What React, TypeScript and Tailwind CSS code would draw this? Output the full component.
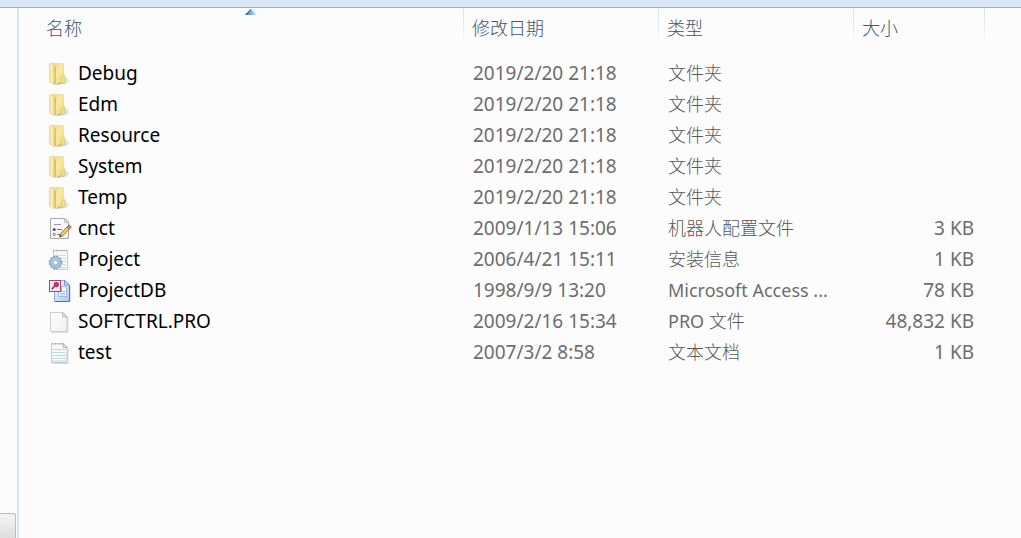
import { useState, type ReactNode } from "react";

type IconKind = "folder" | "config" | "setup" | "database" | "blank" | "text";

interface Entry {
  name: string;
  date: string;
  type: string;
  size: string;
  icon: IconKind;
}

const entries: Entry[] = [
  { name: "Debug", date: "2019/2/20 21:18", type: "文件夹", size: "", icon: "folder" },
  { name: "Edm", date: "2019/2/20 21:18", type: "文件夹", size: "", icon: "folder" },
  { name: "Resource", date: "2019/2/20 21:18", type: "文件夹", size: "", icon: "folder" },
  { name: "System", date: "2019/2/20 21:18", type: "文件夹", size: "", icon: "folder" },
  { name: "Temp", date: "2019/2/20 21:18", type: "文件夹", size: "", icon: "folder" },
  { name: "cnct", date: "2009/1/13 15:06", type: "机器人配置文件", size: "3 KB", icon: "config" },
  { name: "Project", date: "2006/4/21 15:11", type: "安装信息", size: "1 KB", icon: "setup" },
  { name: "ProjectDB", date: "1998/9/9 13:20", type: "Microsoft Access ...", size: "78 KB", icon: "database" },
  { name: "SOFTCTRL.PRO", date: "2009/2/16 15:34", type: "PRO 文件", size: "48,832 KB", icon: "blank" },
  { name: "test", date: "2007/3/2 8:58", type: "文本文档", size: "1 KB", icon: "text" },
];

function Gradients() {
  return (
    <svg className="absolute h-0 w-0" aria-hidden="true">
      <defs>
        <linearGradient id="folderBack" x1="0" x2="1" y1="0" y2="1">
          <stop offset="0" stopColor="#f0d57e" />
          <stop offset="0.5" stopColor="#fae9a4" />
          <stop offset="1" stopColor="#efd57c" />
        </linearGradient>
        <linearGradient id="folderSide" x1="0" x2="1" y1="0" y2="0">
          <stop offset="0" stopColor="#eedb9a" />
          <stop offset="0.5" stopColor="#fcf1bd" />
          <stop offset="1" stopColor="#e3c468" />
        </linearGradient>
        <linearGradient id="folderShade" x1="0" x2="1" y1="0" y2="0">
          <stop offset="0" stopColor="#7f8286" stopOpacity="0.8" />
          <stop offset="1" stopColor="#b9bbc0" stopOpacity="0.15" />
        </linearGradient>
        <linearGradient id="paper" x1="0" x2="1" y1="0" y2="1">
          <stop offset="0" stopColor="#ffffff" />
          <stop offset="1" stopColor="#f0f0ee" />
        </linearGradient>
        <linearGradient id="bluePaper" x1="0" x2="1" y1="0" y2="1">
          <stop offset="0" stopColor="#f4f8ff" />
          <stop offset="1" stopColor="#a9c6f3" />
        </linearGradient>
        <linearGradient id="sortArrow" x1="0" x2="1" y1="0" y2="0">
          <stop offset="0" stopColor="#2b5f83" />
          <stop offset="0.45" stopColor="#6fb6d6" />
          <stop offset="1" stopColor="#c8ecfb" />
        </linearGradient>
      </defs>
    </svg>
  );
}

function FileIcon({ kind }: { kind: IconKind }) {
  let body: ReactNode;
  if (kind === "folder") {
    body = (
      <>
        <path d="M8 22.8L17 22L22.5 19.2L20 17L16.5 15Z" fill="url(#folderShade)" />
        <path d="M3 1.2L15.6 1.8V19.5L8 21.5L3 19Z" fill="url(#folderBack)" stroke="#e3cb80" strokeWidth="0.5" />
        <path d="M14.6 14.4L16.8 13.6V20.4L14.8 21.6L13.4 21V15.4Z" fill="#f5dc85" stroke="#d8bc62" strokeWidth="0.5" />
        <path d="M1.4 2L3.8 1.4L6.8 4.2V23L1.4 20Z" fill="url(#folderSide)" stroke="#e0ca86" strokeWidth="0.5" />
        <path d="M6.8 4.4V22.8L8 22V5Z" fill="#cfa946" opacity="0.6" />
      </>
    );
  } else if (kind === "config") {
    body = (
      <>
        <path d="M2.5 1.5H17L20.5 5V21.5H2.5Z" fill="url(#paper)" stroke="#aaaaac" />
        <path d="M16.5 1.5V5.5H20.5Z" fill="#e0e0e0" stroke="#aaaaac" strokeWidth="0.7" />
        <path d="M6 7.5H13" stroke="#9b9bab" />
        <path d="M9 12.5H14M9 17.5H12" stroke="#77778e" />
        <circle cx="6.2" cy="12.4" r="1.5" fill="#4b4b86" />
        <circle cx="6.2" cy="17.4" r="1.2" fill="#ffffff" stroke="#5b5b96" strokeWidth="0.8" />
        <path d="M11.5 20L12.6 16.6L20 9L22.2 11.2L14.8 18.8Z" fill="#f0cd62" stroke="#81683a" strokeWidth="0.8" />
        <path d="M19 10L21.2 7.8L23.4 10L21.2 12.2Z" fill="#c4857a" stroke="#744742" strokeWidth="0.5" />
        <path d="M11.5 20L12.2 17.8L13.8 19.3Z" fill="#343434" />
      </>
    );
  } else if (kind === "setup") {
    body = (
      <>
        <path d="M5.5 2.5H19.5V21.5H5.5Z" fill="#f6f9fa" stroke="#c3ccd1" />
        <path d="M5.5 2.5H19.5" stroke="#98a4ab" strokeWidth="1.6" strokeDasharray="1 1.5" />
        <path d="M7 7.5H18M7 10.5H18M12 13.5H18M12 16.5H18M12 19.5H18" stroke="#cfdee6" />
        <circle cx="7.5" cy="14.5" r="6" fill="none" stroke="#86a9c0" strokeWidth="1.8" strokeDasharray="1.9 1.24" />
        <circle cx="7.5" cy="14.5" r="4.2" fill="#edf5fa" stroke="#a9c7dc" strokeWidth="3" />
        <circle cx="7.5" cy="14.5" r="2.4" fill="#ffffff" stroke="#7fa3bd" strokeWidth="0.9" />
        <circle cx="7.5" cy="14.5" r="5.6" fill="none" stroke="#7aa2be" strokeWidth="0.8" />
      </>
    );
  } else if (kind === "database") {
    body = (
      <>
        <path d="M6.5 1.5H17L21.5 6V22.5H6.5Z" fill="url(#bluePaper)" stroke="#8fabd6" />
        <path d="M7 22.5H21.7V7" fill="none" stroke="#4c71ad" />
        <path d="M16.5 1.5V6H21.5Z" fill="#c7daf6" stroke="#6687bd" strokeWidth="0.8" />
        <path d="M13.5 7.5H18.5V12.5H13.5ZM10.5 12.5H18.5V17.5H10.5Z" fill="#f8fbff" stroke="#9db9e6" />
        <path d="M12 14.5H17M12 16H17" stroke="#a7c0e8" />
        <rect x="1.5" y="1.5" width="11" height="11" fill="#f6e6ec" stroke="#a94a69" />
        <circle cx="8.3" cy="5.6" r="1.9" fill="#b85c79" stroke="#972c4d" strokeWidth="1.3" />
        <path d="M7.2 6.6L3.8 10.2" stroke="#a84464" strokeWidth="1.8" />
      </>
    );
  } else if (kind === "text") {
    body = (
      <>
        <path d="M4.5 22.2H19.8V6" fill="none" stroke="#b2b2b2" opacity="0.7" />
        <path d="M3.5 2.8H15.5L19 6V21.5H3.5Z" fill="#f6f9fa" stroke="#c8ccce" />
        <path d="M4 2.8H16" stroke="#a5a8aa" strokeWidth="1.6" strokeDasharray="1.2 1.6" />
        <path d="M15 3V6.5H19Z" fill="#dedede" stroke="#a9abad" strokeWidth="0.7" />
        <path d="M4 8.5H18M4 11.5H18M4 14.5H18M4 17.5H18M4 20H18" stroke="#c3dae7" strokeWidth="1.2" />
      </>
    );
  } else {
    body = (
      <>
        <path d="M3.5 22.2H19.8V7" fill="none" stroke="#bdbdbd" opacity="0.6" />
        <path d="M2.5 2.5H15L19 6.5V21.5H2.5Z" fill="url(#paper)" stroke="#cdcdcb" />
        <path d="M14.5 2.5V7H19Z" fill="#e2e2e0" stroke="#b4b4b2" strokeWidth="0.8" />
      </>
    );
  }
  return (
    <svg className="h-6 w-6 shrink-0" viewBox="0 0 24 24" aria-hidden="true">
      {body}
    </svg>
  );
}

/* Latin runs keep the regular weight; Chinese runs are set light. */
function TypeLabel({ text }: { text: string }) {
  const runs = text.match(/[\u0000-\u00ff]+|[^\u0000-\u00ff]+/g) ?? [];
  return (
    <>
      {runs.map((run, i) => (
        <span key={i} className={run.charCodeAt(0) < 256 ? "font-normal text-[#6d6d6d]" : "font-light text-[#585858]"}>
          {run}
        </span>
      ))}
    </>
  );
}

const columns = ["名称", "修改日期", "类型", "大小"];

export default function App() {
  const [ascending, setAscending] = useState(true);
  const rows = ascending ? entries : [...entries].reverse();

  return (
    <div className="flex min-h-screen flex-col bg-[#fcfcfc] font-['Noto_Sans','Noto_Sans_CJK_SC',sans-serif]">
      <Gradients />
      <div className="h-2 shrink-0 border-b border-[#9fafc5] bg-[#dbe8f5]" />
      <div className="flex grow">
        <aside className="flex w-[19px] shrink-0 flex-col justify-end border-r-2 border-[#d6e5f5] pr-px">
          <div className="h-[25px] rounded-tr-[3px] border-t border-r border-[#bcbcbc] bg-linear-to-b from-[#f5f5f5] to-[#dedede]" />
        </aside>
        <main className="min-w-0 grow pl-[19px]">
          <table className="w-full table-fixed border-collapse text-left">
            <colgroup>
              <col className="w-[426px]" />
              <col className="w-[195px]" />
              <col className="w-[195px]" />
              <col className="w-[131px]" />
              <col />
            </colgroup>
            <thead>
              <tr>
                {columns.map((label, i) => (
                  <th
                    key={label}
                    scope="col"
                    className="relative h-[50px] bg-[linear-gradient(#d6e5f5,#dfeaf6_50%,#fcfcfc)] bg-[length:1px_36px] bg-right-top bg-no-repeat p-0 align-top font-light"
                  >
                    <button
                      type="button"
                      onClick={() => setAscending(!ascending)}
                      className="h-10 w-full pl-2 text-left text-lg text-[#3f5570]"
                    >
                      {label}
                    </button>
                    {i === 0 && (
                      <svg
                        className={ascending ? "absolute top-px left-1/2 h-[6px] w-3 -translate-x-1/2" : "absolute top-px left-1/2 h-[6px] w-3 -translate-x-1/2 rotate-180"}
                        viewBox="0 0 12 6"
                        aria-hidden="true"
                      >
                        <path d="M6 0L12 6H0Z" fill="url(#sortArrow)" />
                        <path d="M6 0.5L0.8 5.7" stroke="#245575" />
                      </svg>
                    )}
                  </th>
                ))}
                <td />
              </tr>
            </thead>
            <tbody>
              {rows.map((row) => (
                <tr key={row.name} className="h-[31px] text-[19px] leading-[31px] whitespace-nowrap text-[#6d6d6d]">
                  <td className="p-0 pl-[10px]">
                    <div className="flex items-center gap-[6px] text-black">
                      <FileIcon kind={row.icon} />
                      <span>{row.name}</span>
                    </div>
                  </td>
                  <td className="p-0 pl-[9px]">{row.date}</td>
                  <td className="p-0 pl-[9px] text-lg leading-[31px]">
                    <TypeLabel text={row.type} />
                  </td>
                  <td className="p-0 pr-[11px] text-right">{row.size}</td>
                  <td />
                </tr>
              ))}
            </tbody>
          </table>
        </main>
      </div>
    </div>
  );
}
